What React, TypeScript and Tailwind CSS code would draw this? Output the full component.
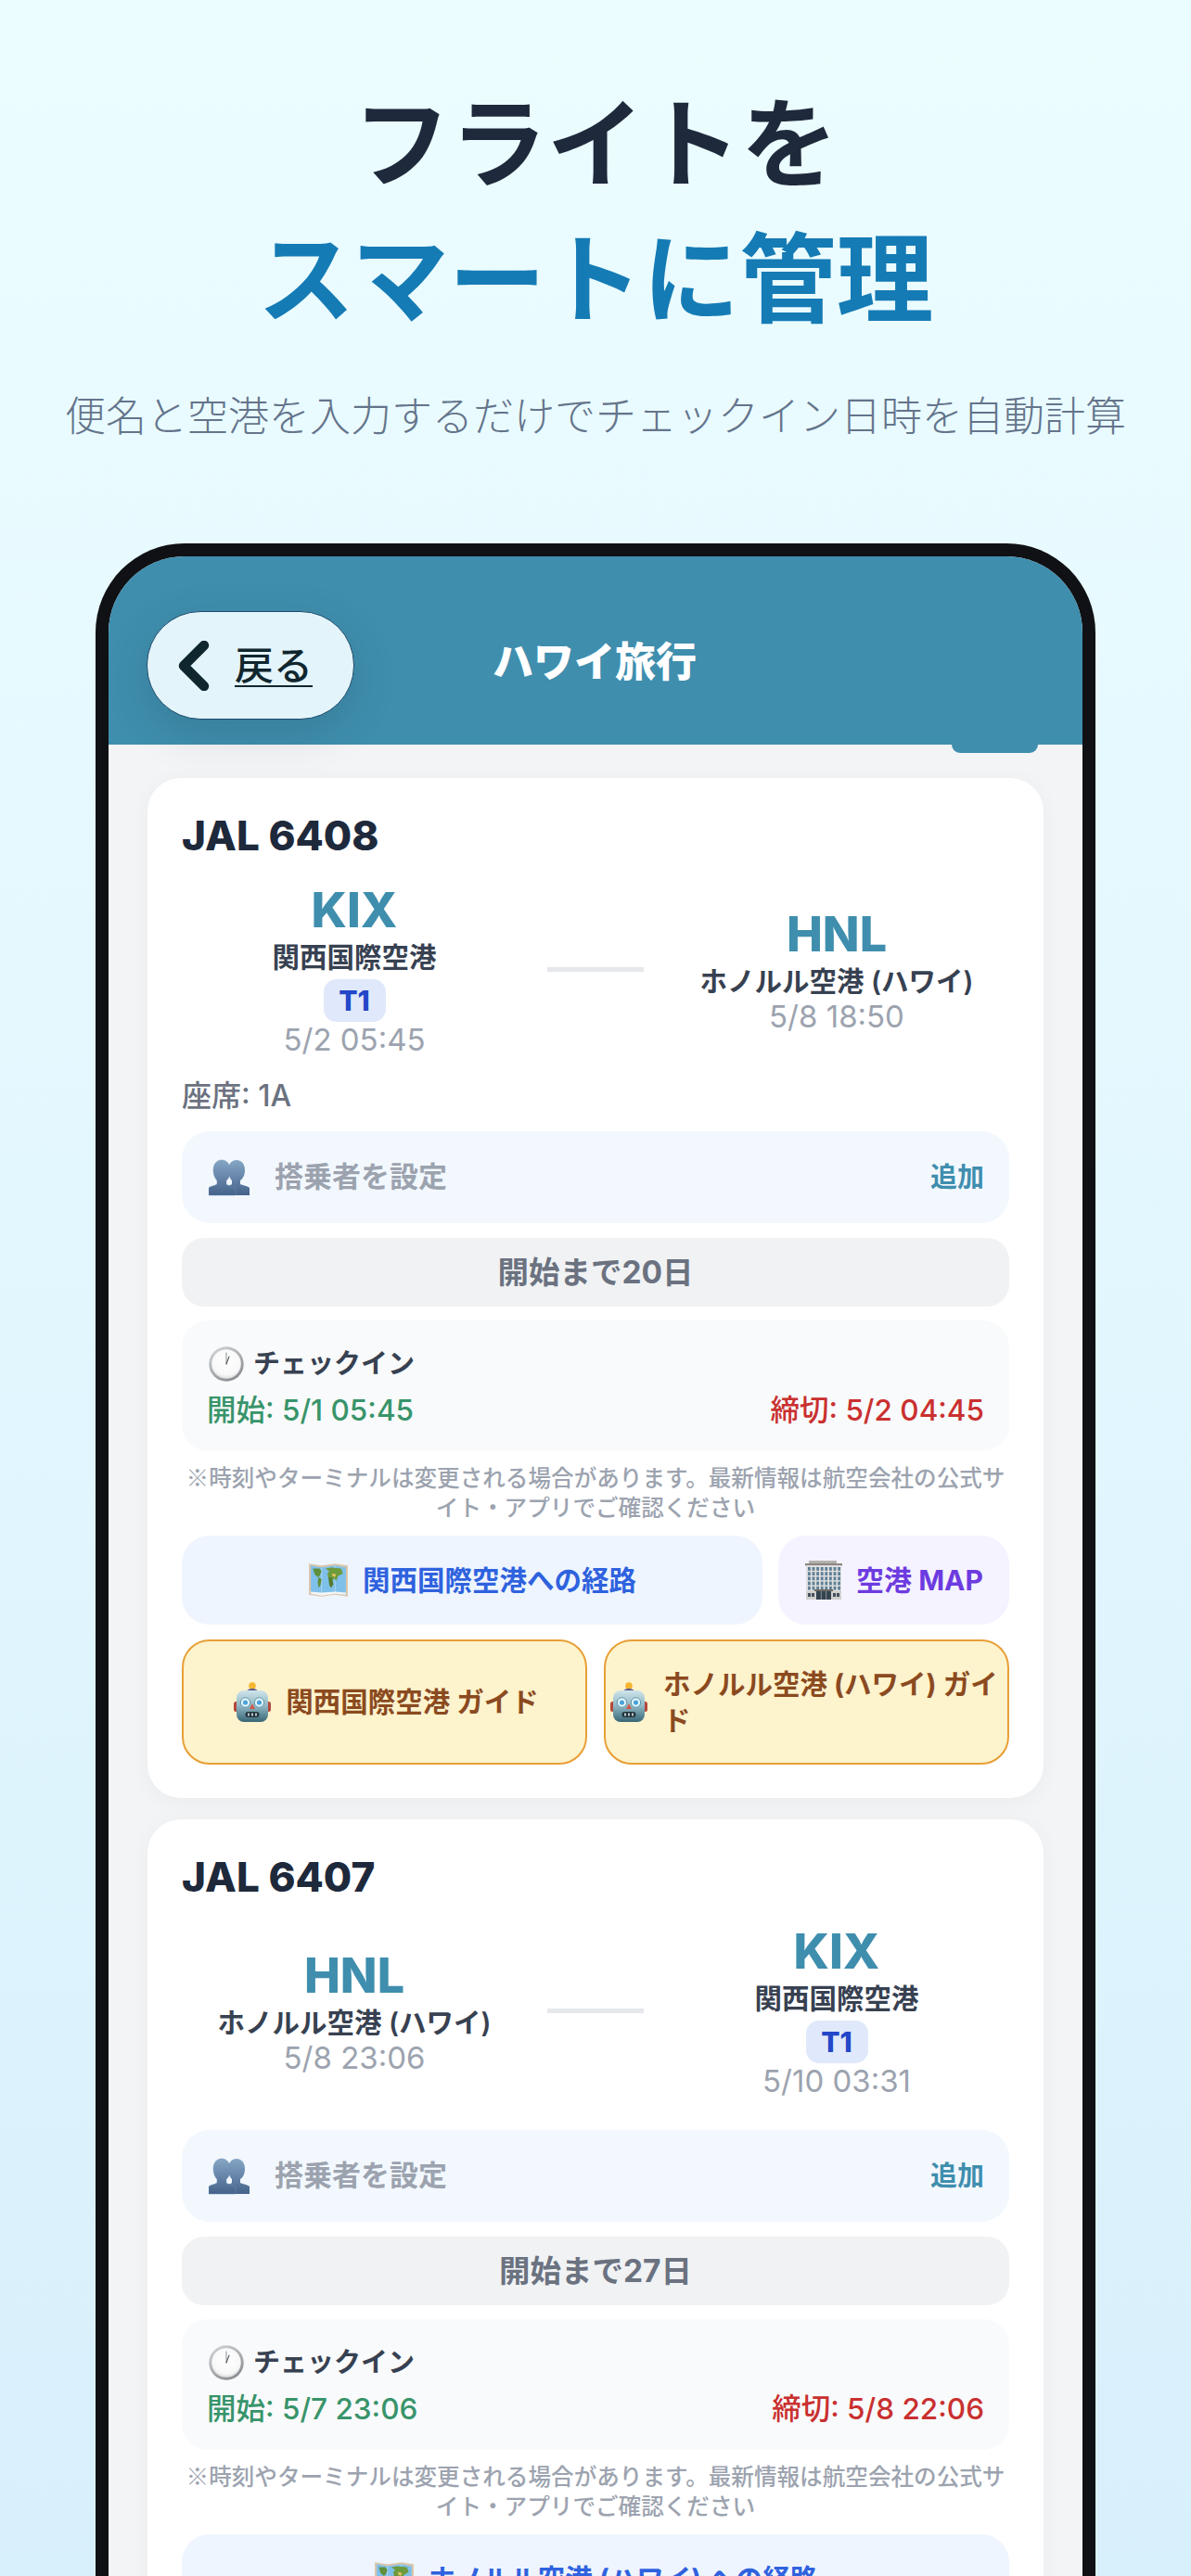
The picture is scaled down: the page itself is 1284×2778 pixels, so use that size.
function Busts() {
  return (
    <svg viewBox="0 0 44 40" className="w-[44px] h-[40px] shrink-0">
      <defs>
        <linearGradient id="bust" x1="0" y1="0" x2="0" y2="1">
          <stop offset="0" stopColor="#86a6c6" />
          <stop offset="1" stopColor="#45638a" />
        </linearGradient>
      </defs>
      <path d="M30 1c-6 0-9 5-9 11 0 5 2 9 4 11v4c-3 2-8 3-10 5v7h29v-8c-2-2-8-3-10-4v-4c3-2 5-6 5-11C39 6 36 1 30 1z" fill="url(#bust)" />
      <path d="M14 1C8 1 5 6 5 12c0 5 2 9 4 11v4c-3 2-7 2-9 4v8h29v-7c-2-3-8-3-10-5v-4c3-2 4-6 4-11C23 6 20 1 14 1z" fill="url(#bust)" stroke="#6d8eb0" strokeWidth="0.5" />
    </svg>
  );
}

function Clock() {
  return (
    <svg viewBox="0 0 38 38" className="w-[38px] h-[38px] shrink-0">
      <defs>
        <linearGradient id="rim" x1="0" y1="0" x2="0.6" y2="1">
          <stop offset="0" stopColor="#d6d8da" />
          <stop offset="1" stopColor="#8c9095" />
        </linearGradient>
        <radialGradient id="face" cx="0.5" cy="0.4" r="0.6">
          <stop offset="0" stopColor="#ffffff" />
          <stop offset="0.8" stopColor="#f8f8f8" />
          <stop offset="1" stopColor="#dcdcdc" />
        </radialGradient>
      </defs>
      <circle cx="19" cy="19" r="18.7" fill="url(#rim)" />
      <circle cx="19" cy="19" r="15.8" fill="url(#face)" />
      <path d="M19 19V7" stroke="#8a8f94" strokeWidth="1" strokeLinecap="round" />
      <path d="M19 19l3-8" stroke="#54595e" strokeWidth="1.1" strokeLinecap="round" />
    </svg>
  );
}

function MapIcon() {
  return (
    <svg viewBox="0 0 42 38" className="w-[44px] h-[40px] shrink-0">
      <path d="M1 2l13 2 14-2 13 2v32l-13-2-14 2-13-2z" fill="#d9c6ab" />
      <path d="M3 4l11 2 14-2 11 2v28l-11-2-14 2-11-2z" fill="#7fc0ea" />
      <path d="M14 6v28M28 4v28" stroke="#a8d4ef" strokeWidth="1" />
      <path d="M5 7h7l2 3-2 5-2 1-3-3zM11 16l3 2-1 6-2 3-1-6z" fill="#5f8f3a" />
      <path d="M18 7l6-1 10 1 2 5-5 3-2 5-2-3-2 2-4-2-1-5 2-2z" fill="#6c9a3c" />
      <path d="M25 12l4 1-1 3-3-1z" fill="#dfc060" />
      <path d="M21 16l4 1 1 6-2 4-2-3z" fill="#557a2c" />
      <path d="M3 31l11 1 14-1 11 1v2l-11-1-14 2-11-2z" fill="#f3f6f7" />
    </svg>
  );
}

function Building() {
  const cols = [0, 1, 2, 3, 4, 5, 6, 7];
  const rows = [0, 1, 2, 3, 4];
  return (
    <svg viewBox="0 0 42 42" className="w-[42px] h-[42px] shrink-0">
      <rect x="5" y="0" width="30" height="4" fill="#b3b1ad" />
      <rect x="1" y="3" width="40" height="2.5" fill="#8b8780" />
      <rect x="2" y="5" width="38" height="37" fill="#dedfe0" />
      {rows.map((r) =>
        cols.map((c) => (
          <rect key={`${r}-${c}`} x={4 + c * 4.6} y={7 + r * 5.2} width="2.8" height="3.8" fill="#5e7f95" />
        )),
      )}
      <rect x="2" y="33" width="38" height="9" fill="#cfcfcd" />
      <rect x="11" y="31" width="20" height="2" fill="#6e6a62" />
      <rect x="13" y="33" width="16" height="9" fill="#34444f" />
      <path d="M18.3 33v9M23.6 33v9" stroke="#9aa4aa" strokeWidth="0.8" />
      <rect x="4" y="35" width="3" height="4" fill="#44515b" />
      <rect x="8" y="35" width="3" height="4" fill="#44515b" />
      <rect x="31" y="35" width="3" height="4" fill="#44515b" />
      <rect x="35" y="35" width="3" height="4" fill="#44515b" />
    </svg>
  );
}

function Robot() {
  return (
    <svg viewBox="0 0 40 44" className="w-[40px] h-[44px] shrink-0">
      <defs>
        <linearGradient id="head" x1="0" y1="0" x2="0" y2="1">
          <stop offset="0" stopColor="#cfe4ea" />
          <stop offset="0.5" stopColor="#8fb6c2" />
          <stop offset="1" stopColor="#386676" />
        </linearGradient>
      </defs>
      <circle cx="20" cy="4" r="3.8" fill="#f5b52e" />
      <path d="M14 11c0-3 3-4 6-4s6 1 6 4z" fill="#5e5a8c" />
      <rect x="0" y="21" width="6" height="11" rx="2.5" fill="#b4483c" />
      <rect x="34" y="21" width="6" height="11" rx="2.5" fill="#b4483c" />
      <rect x="3" y="9" width="34" height="34" rx="8" fill="url(#head)" />
      <circle cx="12.5" cy="22" r="5.2" fill="#e6f6fb" stroke="#5c93a8" strokeWidth="1" />
      <circle cx="27.5" cy="22" r="5.2" fill="#e6f6fb" stroke="#5c93a8" strokeWidth="1" />
      <circle cx="12.5" cy="22" r="2.6" fill="#4aa3dc" />
      <circle cx="27.5" cy="22" r="2.6" fill="#4aa3dc" />
      <path d="M20 23l3 6h-6z" fill="#d0574a" />
      <rect x="12.5" y="32" width="15" height="6" rx="3" fill="#22343c" />
      <path d="M16 33.5v3M20 33.5v3M24 33.5v3" stroke="#dfe6e8" strokeWidth="1.6" />
    </svg>
  );
}

function Airport({ code, name, terminal, time }: { code: string; name: string; terminal?: string; time: string }) {
  return (
    <div className="flex-1 flex flex-col items-center min-w-0">
      <div className="text-[52px] leading-[62px] font-extrabold text-[#3f8eae]">{code}</div>
      <div className="text-[29.5px] leading-[38px] font-semibold text-[#374151] whitespace-nowrap">{name}</div>
      {terminal && (
        <div className="mt-[5px] h-[46px] w-[67px] flex items-center justify-center rounded-[14px] bg-[#e0e9fb] text-[30px] font-extrabold text-[#2347c8]">
          {terminal}
        </div>
      )}
      <div className="text-[33px] leading-[38px] text-[#9ca3af]">{time}</div>
    </div>
  );
}

type Flight = {
  number: string;
  from: { code: string; name: string; terminal?: string; time: string };
  to: { code: string; name: string; terminal?: string; time: string };
  seat?: string;
  days: number;
  open: string;
  close: string;
  routeLabel: string;
  guides: string[];
};

const flights: Flight[] = [
  {
    number: 'JAL 6408',
    from: { code: 'KIX', name: '関西国際空港', terminal: 'T1', time: '5/2 05:45' },
    to: { code: 'HNL', name: 'ホノルル空港 (ハワイ)', time: '5/8 18:50' },
    seat: '1A',
    days: 20,
    open: '5/1 05:45',
    close: '5/2 04:45',
    routeLabel: '関西国際空港への経路',
    guides: ['関西国際空港 ガイド', 'ホノルル空港 (ハワイ) ガイド'],
  },
  {
    number: 'JAL 6407',
    from: { code: 'HNL', name: 'ホノルル空港 (ハワイ)', time: '5/8 23:06' },
    to: { code: 'KIX', name: '関西国際空港', terminal: 'T1', time: '5/10 03:31' },
    days: 27,
    open: '5/7 23:06',
    close: '5/8 22:06',
    routeLabel: 'ホノルル空港 (ハワイ) への経路',
    guides: ['ホノルル空港 (ハワイ) ガイド', '関西国際空港 ガイド'],
  },
];

function FlightCard({ flight }: { flight: Flight }) {
  return (
    <div className="bg-white rounded-[36px] px-[37px] pt-[37px] pb-[36px] shadow-[0_4px_24px_rgba(0,0,0,0.04)] shrink-0">
      <div className="text-[44px] leading-[50px] font-extrabold text-[#1e293b] mb-[25px]">{flight.number}</div>
      <div className="flex items-center gap-[22px] mb-[23px]">
        <Airport {...flight.from} />
        <div className="w-[104px] h-[5px] bg-[#e5e7eb] shrink-0"></div>
        <Airport {...flight.to} />
      </div>
      {flight.seat ? (
        <div className="text-[32px] leading-[38px] font-medium text-[#6b7280] mb-[19px]">座席: {flight.seat}</div>
      ) : (
        <div className="h-[11px]"></div>
      )}
      <div className="h-[99px] rounded-[30px] bg-[#f2f8fe] flex items-center pl-[29px] pr-[27px]">
        <Busts />
        <span className="ml-[27px] flex-1 text-[31px] font-semibold text-[#9ca3af]">搭乗者を設定</span>
        <span className="text-[29px] font-bold text-[#3f8eae]">追加</span>
      </div>
      <div className="mt-[16px] h-[74px] rounded-[24px] bg-[#f1f2f4] flex items-center justify-center text-[33.5px] font-bold text-[#6b7280]">
        開始まで{flight.days}日
      </div>
      <div className="mt-[15px] h-[141px] rounded-[28px] bg-[#f9fafb] pl-[27px] pr-[27px] pt-[28px]">
        <div className="flex items-center gap-[10px] h-[38px] pl-[2px]">
          <Clock />
          <span className="text-[29px] font-bold text-[#374151]">チェックイン</span>
        </div>
        <div className="mt-[12px] flex justify-between text-[31.5px] leading-[38px] font-medium">
          <span className="text-[#38946a]">開始: {flight.open}</span>
          <span className="text-[#c9302f]">締切: {flight.close}</span>
        </div>
      </div>
      <p className="mt-[11px] text-center text-[24.6px] leading-[32px] font-medium text-[#9ca3af]">
        <span className="[font-family:'Noto_Sans_CJK_JP',sans-serif]">※</span>
        時刻やターミナルは変更される場合があります。最新情報は航空会社の公式サイト・アプリでご確認ください
      </p>
      <div className="mt-[14px] flex flex-wrap gap-[17px]">
        <div
          className={`${flight.routeLabel.length > 12 ? 'w-full' : 'flex-1'} h-[96px] rounded-[30px] bg-[#eef5fe] flex items-center justify-center gap-[15px] text-[29.5px] font-bold text-[#2f62de] whitespace-nowrap`}
        >
          <MapIcon />
          {flight.routeLabel}
        </div>
        <div className="w-[249px] h-[96px] rounded-[30px] bg-[#f5f3ff] flex items-center justify-center gap-[14px] text-[30px] font-bold text-[#6d3be0]">
          <Building />
          空港 MAP
        </div>
      </div>
      <div className="mt-[16px] grid grid-cols-2 gap-[18px]">
        {flight.guides.map((g) => (
          <div
            key={g}
            className={`h-[135px] rounded-[30px] bg-[#fdf3cd] border-[2.5px] border-[#e89f36] flex items-center text-[29.5px] leading-[39px] font-bold text-[#8b4a1f] ${
              g.length < 12 ? 'justify-center gap-[16px] pl-[4px]' : 'pl-[5px] pr-[6px] gap-[17px]'
            }`}
          >
            <Robot />
            <span className="min-w-0">{g}</span>
          </div>
        ))}
      </div>
    </div>
  );
}

export default function App() {
  return (
    <div className="h-[2778px] overflow-hidden flex flex-col items-center bg-gradient-to-b from-[#ecfdff] to-[#d8f0fc] [font-family:Inter,'Noto_Sans_CJK_JP',sans-serif]">
      <h1 className="mt-[82px] text-center text-[104.5px] leading-[146px] font-bold text-[#1e293b]">
        <div>フライトを</div>
        <div className="text-[#157bb5]">スマートに管理</div>
      </h1>
      <p className="mt-[45px] text-[44px] leading-[60px] font-light text-[#64748b] whitespace-nowrap">
        便名と空港を入力するだけでチェックイン日時を自動計算
      </p>
      <div className="mt-[107px] w-[1078px] flex-1 border-[14px] border-b-0 border-[#101114] rounded-t-[96px] overflow-hidden bg-[#f3f4f6] flex flex-col min-h-0">
        <div className="relative z-10 h-[203px] shrink-0 bg-[#3f8eae]">
          <div className="absolute left-[41px] top-[59px] w-[224px] h-[117px] rounded-[58px] border-[1.5px] border-[#1d4a6b] bg-[#e3f4fa] flex items-center pl-[33px] shadow-[0_14px_50px_rgba(0,0,0,0.12)]">
            <svg viewBox="0 0 34 54" className="w-[34px] h-[54px]">
              <path d="M28 5L6 27l22 22" fill="none" stroke="#10262e" strokeWidth="10.5" strokeLinecap="round" strokeLinejoin="round" />
            </svg>
            <span className="ml-[27px] text-[42px] font-medium underline decoration-2 underline-offset-[6px] text-[#10262e]">戻る</span>
          </div>
          <div className="h-full flex items-center justify-center pt-[24px] pr-[2px] text-[44px] font-extrabold text-white">ハワイ旅行</div>
          <div className="absolute right-[48px] -bottom-[9px] w-[93px] h-[9px] rounded-b-[16px] bg-[#3f8eae]"></div>
        </div>
        <div className="px-[42px] pt-[36px] flex flex-col gap-[23px]">
          {flights.map((f) => (
            <FlightCard key={f.number} flight={f} />
          ))}
        </div>
      </div>
    </div>
  );
}
